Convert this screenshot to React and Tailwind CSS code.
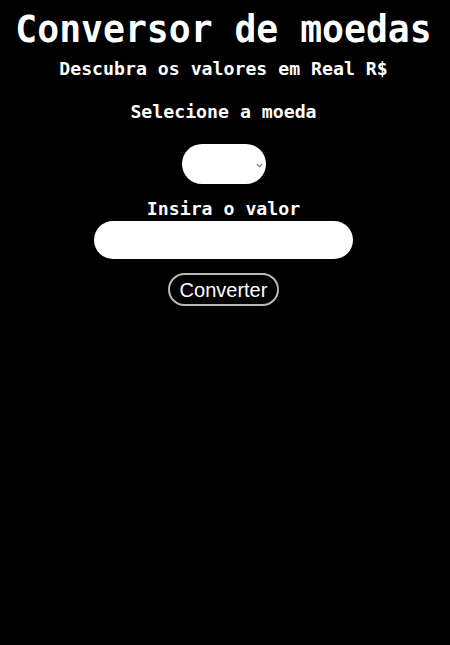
import React from "react";

export default function App() {
  const mono = { fontFamily: '"DejaVu Sans Mono", "Liberation Mono", monospace' };
  return (
    <div className="min-h-[645px] w-full bg-black text-white flex flex-col items-center pr-[3px]" style={mono}>
      <h1 className="mt-[9px] text-[36.4px] leading-[42px] font-bold whitespace-nowrap">Conversor de moedas</h1>
      <p className="mt-[7px] text-[18.2px] leading-[21px] font-bold whitespace-nowrap">Descubra os valores em Real R$</p>
      <p className="mt-[22px] text-[18.2px] leading-[21px] font-bold whitespace-nowrap">Selecione a moeda</p>
      <div className="relative mt-[22px] w-[84px] h-[40px]">
        <select className="appearance-none w-full h-full rounded-[20px] bg-white text-black outline-none border-0 px-3" defaultValue="">
          <option value=""></option>
        </select>
        <svg className="absolute left-[74px] top-[19px] pointer-events-none" width="7" height="5" viewBox="0 0 7 5" fill="none">
          <path d="M0.8 0.8 L3.5 3.6 L6.2 0.8" stroke="#7a7a7a" strokeWidth="1.2" />
        </svg>
      </div>
      <p className="mt-[14px] text-[18.2px] leading-[21px] font-bold whitespace-nowrap">Insira o valor</p>
      <input type="text" className="mt-[2px] w-[259px] h-[38px] rounded-[19px] bg-white text-black outline-none border-0 px-4" />
      <button
        className="mt-[14px] h-[33px] w-[111px] rounded-[17px] border-2 border-[#b8b8b8] bg-black text-white text-[20px] leading-[24px] flex items-center justify-center"
        style={{ fontFamily: '"Liberation Sans", Arial, sans-serif' }}
      >
        Converter
      </button>
    </div>
  );
}
